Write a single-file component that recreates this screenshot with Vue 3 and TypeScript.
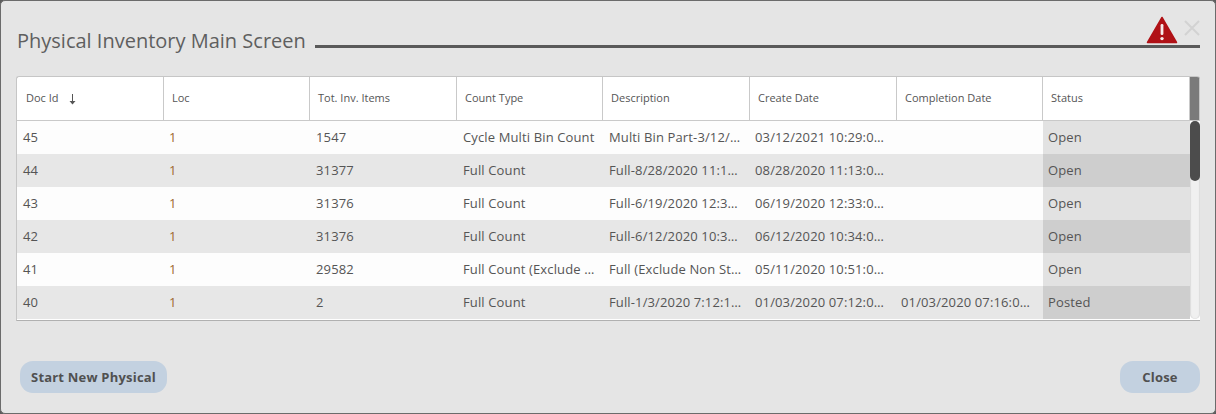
<script setup lang="ts">
interface Row {
  id: string; loc: string; items: string; type: string; desc: string;
  created: string; completed: string; status: string;
}
const cols = ['Loc', 'Tot. Inv. Items', 'Count Type', 'Description', 'Create Date', 'Completion Date', 'Status'];
const rows: Row[] = [
  { id: '45', loc: '1', items: '1547', type: 'Cycle Multi Bin Count', desc: 'Multi Bin Part-3/12/2021 10:29', created: '03/12/2021 10:29:00 AM', completed: '', status: 'Open' },
  { id: '44', loc: '1', items: '31377', type: 'Full Count', desc: 'Full-8/28/2020 11:13:00 AM', created: '08/28/2020 11:13:00 AM', completed: '', status: 'Open' },
  { id: '43', loc: '1', items: '31376', type: 'Full Count', desc: 'Full-6/19/2020 12:33:00 PM', created: '06/19/2020 12:33:00 PM', completed: '', status: 'Open' },
  { id: '42', loc: '1', items: '31376', type: 'Full Count', desc: 'Full-6/12/2020 10:34:00 AM', created: '06/12/2020 10:34:00 AM', completed: '', status: 'Open' },
  { id: '41', loc: '1', items: '29582', type: 'Full Count (Exclude Non Stock)', desc: 'Full (Exclude Non Stock) 5/11', created: '05/11/2020 10:51:00 AM', completed: '', status: 'Open' },
  { id: '40', loc: '1', items: '2', type: 'Full Count', desc: 'Full-1/3/2020 7:12:11 AM', created: '01/03/2020 07:12:00 AM', completed: '01/03/2020 07:16:00 AM', status: 'Posted' },
];
</script>

<template>
  <div class="modal">
    <header class="head">
      <h1 class="title">Physical Inventory Main Screen</h1>
      <div class="rule"></div>
      <svg class="warn" width="32" height="28" viewBox="0 0 32 28" aria-hidden="true">
        <path d="M16 1.5 L30.5 26.5 L1.5 26.5 Z" fill="#b01116" stroke="#b01116" stroke-width="1.5" stroke-linejoin="round" />
        <rect x="14.6" y="8" width="2.8" height="11" rx="1.2" fill="#f6eaea" />
        <circle cx="16" cy="22.6" r="1.7" fill="#f6eaea" />
      </svg>
      <svg class="x" width="16" height="16" viewBox="0 0 16 16" aria-hidden="true">
        <path d="M1 1 L15 15 M15 1 L1 15" stroke="#d2d2d2" stroke-width="2" fill="none" />
      </svg>
    </header>

    <section class="table">
      <div class="thead">
        <div class="th first">Doc Id
          <svg class="sort" width="9" height="11" viewBox="0 0 9 11" aria-hidden="true">
            <path d="M4.5 0 V8" stroke="#555" stroke-width="1" />
            <path d="M1.5 7 H7.5 L4.5 10.5 Z" fill="#555" />
          </svg>
        </div>
        <div v-for="c in cols" :key="c" class="th">{{ c }}</div>
        <div class="th-bar"></div>
      </div>
      <div class="tbody">
        <div class="rows">
          <div v-for="r in rows" :key="r.id" class="tr">
            <div class="td id">{{ r.id }}</div>
            <div class="td loc">{{ r.loc }}</div>
            <div class="td">{{ r.items }}</div>
            <div class="td">{{ r.type }}</div>
            <div class="td">{{ r.desc }}</div>
            <div class="td">{{ r.created }}</div>
            <div class="td">{{ r.completed }}</div>
            <div class="td status">{{ r.status }}</div>
          </div>
        </div>
        <div class="track"><div class="thumb"></div></div>
      </div>
    </section>

    <footer class="foot">
      <button class="btn start" type="button">Start New Physical</button>
      <button class="btn close" type="button">Close</button>
    </footer>
  </div>
</template>

<style>
html, body { margin: 0; background: #5c5c5c; }
</style>

<style scoped>
.modal {
  box-sizing: border-box;
  width: 1216px;
  height: 414px;
  background: #e5e5e5;
  border: 1px solid #6b6b6b;
  border-radius: 5px;
  padding: 0 15px;
  display: flex;
  flex-direction: column;
  font-family: "Open Sans", sans-serif;
  color: #555;
  overflow: hidden;
}
.head {
  height: 75px;
  flex: none;
  display: flex;
  align-items: flex-start;
  position: relative;
}
.title {
  margin: 26px 0 0 1px;
  font-size: 20px;
  line-height: 28px;
  font-weight: 400;
  color: #5f5f5f;
  white-space: nowrap;
}
.rule {
  flex: 1;
  height: 3px;
  background: #5a5a5a;
  margin: 44px 0 0 9px;
}
.warn { position: absolute; right: 22px; top: 15px; }
.x { position: absolute; right: 0; top: 19px; }
.table {
  width: 1184px;
  height: 245px;
  flex: none;
  box-sizing: border-box;
  border: 1px solid #c6c6c6;
  border-right: none;
  border-bottom: 1px solid #b0b0b0;
  border-radius: 3px 3px 0 0;
  background: #fff;
  overflow: hidden;
}
.thead {
  height: 44px;
  box-sizing: border-box;
  display: grid;
  grid-template-columns: 147px 146px 147px 146px 147px 147px 146px 147px 1fr;
  border-bottom: 1px solid #c9c9c9;
}
.th {
  font-size: 11px;
  line-height: 42px;
  padding-left: 8px;
  border-right: 1px solid #c9c9c9;
  color: #555;
  white-space: nowrap;
}
.th.first { padding-left: 9px; }
.sort { margin-left: 7px; vertical-align: -3px; }
.th-bar { background: #7a7a7a; border-right: 1px solid #c6c6c6; }
.tbody { display: flex; height: 198px; overflow: hidden; }
.rows { width: 1173px; flex: none; }
.tr {
  height: 33px;
  display: grid;
  grid-template-columns: 146px 147px 147px 146px 146px 146px 148px 147px;
  background: #fdfdfd;
}
.tr:nth-child(even) { background: #e7e7e7; }
.td {
  font-size: 13px;
  line-height: 33px;
  letter-spacing: 0.13px;
  padding: 0 6px;
  color: #555;
  overflow: hidden;
  white-space: nowrap;
  text-overflow: ellipsis;
  min-width: 0;
}
.loc { color: #a06a30; }
.status { background: #e2e2e2; padding-left: 5px; }
.tr:nth-child(even) .status { background: #cecece; }
.track {
  flex: 1;
  background: #f0f0f0;
  border-radius: 5px;
  box-shadow: inset 1px 0 1px #dcdcdc, inset -1px 0 1px #dcdcdc;
}
.thumb {
  height: 60px;
  background: #4c4c4c;
  border-radius: 5px;
}
.foot {
  flex: 1;
  display: flex;
  justify-content: space-between;
  align-items: flex-start;
  padding: 40px 0 0 4px;
  width: 1184px;
  box-sizing: border-box;
}
.btn {
  height: 32px;
  border: none;
  border-radius: 13px;
  background: #c3d1e0;
  color: #505050;
  font-family: "Open Sans", sans-serif;
  font-weight: 700;
  font-size: 13px;
  letter-spacing: 0.2px;
  padding: 0;
}
.start { width: 147px; }
.close { width: 80px; }
</style>
